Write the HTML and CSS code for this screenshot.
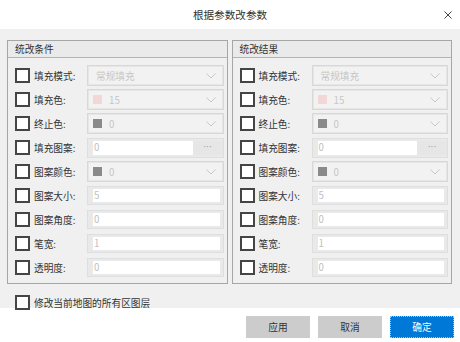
FILE: index.html
```html
<!DOCTYPE html>
<html lang="zh-CN">
<head>
<meta charset="utf-8">
<title>根据参数改参数</title>
<link rel="stylesheet" href="styles.css">
</head>
<body>
<div class="dialog">
  <div class="titlebar">
    <span></span>
    <span class="title">根据参数改参数</span>
    <span class="close"><svg width="8" height="8" viewBox="0 0 8 8"><path d="M0.5 0.5L7.5 7.5M7.5 0.5L0.5 7.5" stroke="#444" stroke-width="1" fill="none"/></svg></span>
  </div>
  <div class="content">
    <div class="groups">
      <section class="group">
        <div class="group-head">统改条件</div>
        <div class="group-body">
          <div class="row"><span class="cb"></span><span class="lbl">填充模式:</span><div class="combo"><span class="val">常规填充</span><svg class="chev" width="10" height="6" viewBox="0 0 10 6"><path d="M0.5 0.5L5 5L9.5 0.5" stroke="#c8c8c8" fill="none"/></svg></div></div>
          <div class="row"><span class="cb"></span><span class="lbl">填充色:</span><div class="combo"><span class="sw pink"></span><span class="val">15</span><svg class="chev" width="10" height="6" viewBox="0 0 10 6"><path d="M0.5 0.5L5 5L9.5 0.5" stroke="#c8c8c8" fill="none"/></svg></div></div>
          <div class="row"><span class="cb"></span><span class="lbl">终止色:</span><div class="combo"><span class="sw grey"></span><span class="val">0</span><svg class="chev" width="10" height="6" viewBox="0 0 10 6"><path d="M0.5 0.5L5 5L9.5 0.5" stroke="#c8c8c8" fill="none"/></svg></div></div>
          <div class="row"><span class="cb"></span><span class="lbl">填充图案:</span><div class="text pick"><span class="inner">0</span><span class="dots">···</span></div></div>
          <div class="row"><span class="cb"></span><span class="lbl">图案颜色:</span><div class="combo"><span class="sw grey"></span><span class="val">0</span><svg class="chev" width="10" height="6" viewBox="0 0 10 6"><path d="M0.5 0.5L5 5L9.5 0.5" stroke="#c8c8c8" fill="none"/></svg></div></div>
          <div class="row"><span class="cb"></span><span class="lbl">图案大小:</span><div class="text"><span class="inner">5</span></div></div>
          <div class="row"><span class="cb"></span><span class="lbl">图案角度:</span><div class="text"><span class="inner">0</span></div></div>
          <div class="row"><span class="cb"></span><span class="lbl">笔宽:</span><div class="text"><span class="inner">1</span></div></div>
          <div class="row"><span class="cb"></span><span class="lbl">透明度:</span><div class="text"><span class="inner">0</span></div></div>
        </div>
      </section>
      <section class="group">
        <div class="group-head">统改结果</div>
        <div class="group-body">
          <div class="row"><span class="cb"></span><span class="lbl">填充模式:</span><div class="combo"><span class="val">常规填充</span><svg class="chev" width="10" height="6" viewBox="0 0 10 6"><path d="M0.5 0.5L5 5L9.5 0.5" stroke="#c8c8c8" fill="none"/></svg></div></div>
          <div class="row"><span class="cb"></span><span class="lbl">填充色:</span><div class="combo"><span class="sw pink"></span><span class="val">15</span><svg class="chev" width="10" height="6" viewBox="0 0 10 6"><path d="M0.5 0.5L5 5L9.5 0.5" stroke="#c8c8c8" fill="none"/></svg></div></div>
          <div class="row"><span class="cb"></span><span class="lbl">终止色:</span><div class="combo"><span class="sw grey"></span><span class="val">0</span><svg class="chev" width="10" height="6" viewBox="0 0 10 6"><path d="M0.5 0.5L5 5L9.5 0.5" stroke="#c8c8c8" fill="none"/></svg></div></div>
          <div class="row"><span class="cb"></span><span class="lbl">填充图案:</span><div class="text pick"><span class="inner">0</span><span class="dots">···</span></div></div>
          <div class="row"><span class="cb"></span><span class="lbl">图案颜色:</span><div class="combo"><span class="sw grey"></span><span class="val">0</span><svg class="chev" width="10" height="6" viewBox="0 0 10 6"><path d="M0.5 0.5L5 5L9.5 0.5" stroke="#c8c8c8" fill="none"/></svg></div></div>
          <div class="row"><span class="cb"></span><span class="lbl">图案大小:</span><div class="text"><span class="inner">5</span></div></div>
          <div class="row"><span class="cb"></span><span class="lbl">图案角度:</span><div class="text"><span class="inner">0</span></div></div>
          <div class="row"><span class="cb"></span><span class="lbl">笔宽:</span><div class="text"><span class="inner">1</span></div></div>
          <div class="row"><span class="cb"></span><span class="lbl">透明度:</span><div class="text"><span class="inner">0</span></div></div>
        </div>
      </section>
    </div>
    <div class="all-row"><span class="cb"></span><span class="all-lbl">修改当前地图的所有区图层</span></div>
  </div>
  <div class="footer">
    <button class="btn">应用</button>
    <button class="btn">取消</button>
    <button class="btn primary">确定</button>
  </div>
</div>
</body>
</html>
```
FILE: styles.css
```css
* { box-sizing: border-box; }
html, body { margin: 0; padding: 0; background: #fff; }
body {
  font-family: "Noto Sans CJK SC", "Noto Sans", sans-serif;
  font-size: 9.7px;
  color: #333;
}
.dialog { width: 460px; height: 342px; overflow: hidden; }
.titlebar {
  height: 29px;
  display: grid;
  grid-template-columns: 1fr auto 1fr;
  align-items: center;
  background: #fff;
}
.title { font-size: 10.6px; line-height: 14px; color: #333; padding-top: 1px; }
.close { justify-self: end; padding-right: 8px; display: flex; }
.content {
  height: 279px;
  background: #f0f0f0;
  padding: 11px 8px 0 7px;
}
.groups { display: flex; gap: 4px; }
.group {
  flex: 1;
  border: 1px solid #a6a6a6;
  background: #f0f0f0;
}
.group-head {
  height: 17px;
  line-height: 17px;
  padding-left: 7px;
  background: #eaeaea;
  border-bottom: 1px solid #b4b4b4;
  color: #333;
}
.group-body {
  padding: 7px 3px 5px 7px;
  display: flex;
  flex-direction: column;
  gap: 3px;
}
.row { height: 21px; display: flex; align-items: center; }
.cb {
  width: 15px; height: 15px;
  border: 2px solid #454545;
  background: #fff;
  flex: none;
}
.lbl { width: 53px; margin-left: 4px; line-height: 14px; flex: none; color: #333; }
.combo {
  flex: 1;
  height: 21px;
  border: 1px solid #d8d8d8;
  box-shadow: inset 0 0 0 1px #e6e6e6;
  background: #f2f2f2;
  display: flex;
  align-items: center;
  padding-left: 4px;
  padding-right: 7px;
}
.val { color: #c6c6c6; line-height: 14px; padding-left: 4px; flex: 1; }
.sw { width: 9px; height: 9px; flex: none; margin-left: 1px; margin-right: 3px; }
.sw.pink { background: #f3d6d6; }
.sw.grey { background: #8a8a8a; }
.chev { flex: none; }
.text {
  flex: 1;
  height: 19px;
  border: 1px solid #dedede;
  background: #e9e9e9;
  padding: 2px 3px 2px 5px;
  display: flex;
}
.inner {
  flex: 1;
  background: #fff;
  color: #c0c0c0;
  line-height: 13px;
  padding-left: 1px;
}
.text.pick { height: 20px; padding-right: 0; }
.dots {
  width: 30px;
  text-align: center;
  color: #9a9a9a;
  font-family: "DejaVu Sans", sans-serif;
  font-size: 9px;
  line-height: 13px;
  letter-spacing: 0;
  background: #e6e6e6;
}
.all-row { display: flex; align-items: center; margin-top: 11px; padding-left: 8px; height: 15px; }
.all-lbl { margin-left: 4px; line-height: 14px; color: #333; }
.footer {
  height: 34px;
  display: flex;
  justify-content: flex-end;
  gap: 8px;
  padding: 8px 6px 0 0;
  background: #fff;
}
.btn {
  width: 64px;
  height: 22px;
  border: none;
  background: #cccccc;
  color: #333;
  font-family: "Noto Sans CJK SC", "Noto Sans", sans-serif;
  font-size: 9.7px;
  line-height: 14px;
  padding: 0;
}
.btn.primary {
  background: #0078d7;
  color: #fff;
  outline: 1px dotted #8fc3ee;
  outline-offset: -1px;
}
```
